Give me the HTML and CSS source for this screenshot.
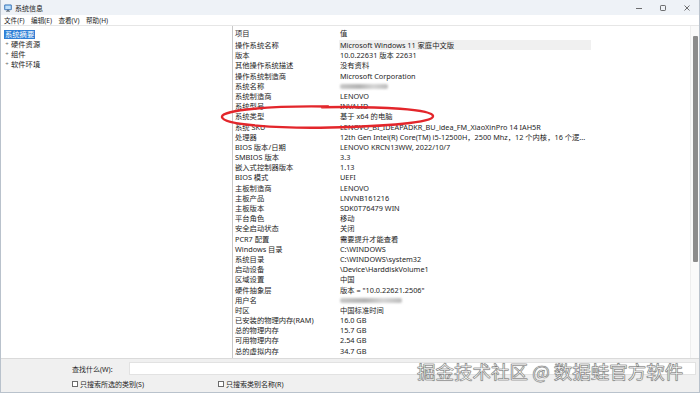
FILE: index.html
```html
<!DOCTYPE html>
<html lang="zh-CN">
<head>
<meta charset="utf-8">
<title>系统信息</title>
<link rel="stylesheet" href="styles.css">
</head>
<body>
<div class="window">
  <div class="titlebar">
    <div class="title-left">
      <svg class="app-icon" width="8" height="8" viewBox="0 0 8 8">
        <rect x="0.5" y="0.8" width="7" height="5" rx="0.6" fill="#4a8fd8" stroke="#2a5f9e" stroke-width="0.5"/>
        <rect x="1.3" y="1.6" width="5.4" height="3.4" fill="#bfe0fb"/>
        <rect x="3" y="5.8" width="2" height="1" fill="#5a6570"/>
        <rect x="2" y="6.8" width="4" height="0.8" fill="#5a6570"/>
      </svg>
      <span class="title-text">系统信息</span>
    </div>
    <div class="controls">
      <svg width="8" height="8" viewBox="0 0 8 8"><line x1="1" y1="4.5" x2="7" y2="4.5" stroke="#333" stroke-width="0.7"/></svg>
      <svg width="8" height="8" viewBox="0 0 8 8"><rect x="1.5" y="1.5" width="5" height="5" rx="0.8" fill="none" stroke="#333" stroke-width="0.7"/></svg>
      <svg width="8" height="8" viewBox="0 0 8 8"><path d="M1.5 1.5 L6.5 6.5 M6.5 1.5 L1.5 6.5" stroke="#333" stroke-width="0.7"/></svg>
    </div>
  </div>
  <div class="menubar">
    <span>文件(F)</span><span>编辑(E)</span><span>查看(V)</span><span>帮助(H)</span>
  </div>
  <div class="main">
    <div class="tree">
      <div class="tree-row"><span class="sel">系统摘要</span></div>
      <div class="tree-row"><span class="exp">+</span>硬件资源</div>
      <div class="tree-row"><span class="exp">+</span>组件</div>
      <div class="tree-row"><span class="exp">+</span>软件环境</div>
    </div>
    <div class="listpane">
      <div class="list">
        <div class="row head"><span class="k">项目</span><span class="v">值</span></div>
        <div class="row hover"><span class="k">操作系统名称</span><span class="v">Microsoft Windows 11 家庭中文版</span></div>
        <div class="row"><span class="k">版本</span><span class="v">10.0.22631 版本 22631</span></div>
        <div class="row"><span class="k">其他操作系统描述</span><span class="v">没有资料</span></div>
        <div class="row"><span class="k">操作系统制造商</span><span class="v">Microsoft Corporation</span></div>
        <div class="row"><span class="k">系统名称</span><span class="v"><span class="blur b1"></span></span></div>
        <div class="row"><span class="k">系统制造商</span><span class="v">LENOVO</span></div>
        <div class="row"><span class="k">系统型号</span><span class="v">INVALID</span></div>
        <div class="row"><span class="k">系统类型</span><span class="v">基于 x64 的电脑</span></div>
        <div class="row"><span class="k">系统 SKU</span><span class="v">LENOVO_BI_IDEAPADKR_BU_idea_FM_XiaoXinPro 14 IAH5R</span></div>
        <div class="row"><span class="k">处理器</span><span class="v">12th Gen Intel(R) Core(TM) i5-12500H，2500 Mhz，12 个内核，16 个逻...</span></div>
        <div class="row"><span class="k">BIOS 版本/日期</span><span class="v">LENOVO KRCN13WW, 2022/10/7</span></div>
        <div class="row"><span class="k">SMBIOS 版本</span><span class="v">3.3</span></div>
        <div class="row"><span class="k">嵌入式控制器版本</span><span class="v">1.13</span></div>
        <div class="row"><span class="k">BIOS 模式</span><span class="v">UEFI</span></div>
        <div class="row"><span class="k">主板制造商</span><span class="v">LENOVO</span></div>
        <div class="row"><span class="k">主板产品</span><span class="v">LNVNB161216</span></div>
        <div class="row"><span class="k">主板版本</span><span class="v">SDK0T76479 WIN</span></div>
        <div class="row"><span class="k">平台角色</span><span class="v">移动</span></div>
        <div class="row"><span class="k">安全启动状态</span><span class="v">关闭</span></div>
        <div class="row"><span class="k">PCR7 配置</span><span class="v">需要提升才能查看</span></div>
        <div class="row"><span class="k">Windows 目录</span><span class="v">C:\WINDOWS</span></div>
        <div class="row"><span class="k">系统目录</span><span class="v">C:\WINDOWS\system32</span></div>
        <div class="row"><span class="k">启动设备</span><span class="v">\Device\HarddiskVolume1</span></div>
        <div class="row"><span class="k">区域设置</span><span class="v">中国</span></div>
        <div class="row"><span class="k">硬件抽象层</span><span class="v">版本 = "10.0.22621.2506"</span></div>
        <div class="row"><span class="k">用户名</span><span class="v"><span class="blur b2"></span></span></div>
        <div class="row"><span class="k">时区</span><span class="v">中国标准时间</span></div>
        <div class="row"><span class="k">已安装的物理内存(RAM)</span><span class="v">16.0 GB</span></div>
        <div class="row"><span class="k">总的物理内存</span><span class="v">15.7 GB</span></div>
        <div class="row"><span class="k">可用物理内存</span><span class="v">2.54 GB</span></div>
        <div class="row"><span class="k">总的虚拟内存</span><span class="v">34.7 GB</span></div>
      </div>
      <div class="scrollbar"><div class="thumb"></div></div>
      <svg class="mark" width="220" height="26" viewBox="0 0 220 26">
        <path d="M110 2.5 C 55 1.5, 3 6, 4 13 C 5 21, 60 24.5, 112 23.5 C 168 22.5, 216 18.5, 215 12 C 214 5.5, 165 2.2, 104 3.2" fill="none" stroke="#e3262b" stroke-width="2.4" stroke-linecap="round"/>
      </svg>
    </div>
  </div>
  <div class="bottom">
    <div class="find">
      <span class="find-label">查找什么(W):</span>
      <div class="input"></div>
    </div>
    <div class="checks">
      <label class="chk c1"><span class="box"></span>只搜索所选的类别(S)</label>
      <label class="chk"><span class="box"></span>只搜索类别名称(R)</label>
    </div>
    <div class="watermark">掘金技术社区 @ 数据蛙官方软件</div>
  </div>
</div>
</body>
</html>
```
FILE: styles.css
```css
* { box-sizing: border-box; }
html, body { margin: 0; padding: 0; }
body {
  width: 700px;
  height: 393px;
  overflow: hidden;
  background: #ffffff;
  font-family: "Noto Sans", "Noto Sans CJK SC", sans-serif;
  font-size: 7.3px;
  color: #1e1e1e;
}
.window {
  width: 700px;
  height: 393px;
  display: flex;
  flex-direction: column;
  border: 1px solid #b9c2cc;
  border-top: none;
  position: relative;
}
.titlebar {
  height: 15px;
  background: #eef2f7;
  display: flex;
  align-items: center;
  justify-content: space-between;
  padding: 0 4px 0 3px;
}
.title-left { display: flex; align-items: center; gap: 3px; }
.app-icon { display: block; }
.title-text { font-size: 7px; color: #222; }
.controls { display: flex; gap: 16px; align-items: center; padding-right: 4px; }
.controls svg { display: block; }
.menubar {
  height: 11px;
  background: #ffffff;
  display: flex;
  align-items: center;
  gap: 6.5px;
  padding-left: 3px;
  font-size: 6.6px;
  border-bottom: 1px solid #e6e6e6;
}
.main {
  height: 333px;
  display: flex;
  background: #ffffff;
  border-bottom: 1px solid #dadada;
}
.tree {
  width: 232px;
  border-right: 1px solid #c8c8c8;
  padding: 3px 0 0 3px;
}
.tree-row {
  height: 10px;
  line-height: 10px;
  display: flex;
  align-items: center;
}
.sel {
  background: #2f7fd6;
  color: #fff;
  padding: 0 1px;
  line-height: 9px;
}
.exp {
  width: 6px;
  font-size: 6px;
  color: #666;
  margin-right: 1px;
  text-align: center;
}
.listpane {
  flex: 1;
  display: flex;
  position: relative;
}
.list { flex: 1; padding-top: 1px; }
.row {
  display: grid;
  grid-template-columns: 106px 252px;
  height: 10.2px;
  line-height: 10.2px;
  white-space: nowrap;
}
.row .k { padding-left: 2px; }
.row .v { padding-left: 1px; overflow: visible; }
.row.head { height: 13px; line-height: 12px; }
.row.hover .v { background: #f0f0f0; }
.blur {
  display: inline-block;
  height: 5px;
  vertical-align: middle;
  background: linear-gradient(90deg, #c8c8c8, #b4b4b4 40%, #d6d6d6 70%, #bdbdbd);
  filter: blur(1px);
  border-radius: 2px;
}
.b1 { width: 48px; }
.b2 { width: 62px; }
.scrollbar {
  width: 9px;
  padding: 10px 1px 0 2px;
  background: #fafafa;
  border-left: 1px solid #eeeeee;
}
.thumb {
  width: 5px;
  height: 226px;
  background: #8c8c8c;
  border-radius: 1px;
}
.mark {
  position: absolute;
  left: -15px;
  top: 78px;
}
.bottom {
  flex: 1;
  background: #f0f0f0;
  position: relative;
  padding: 3px 3px 0 71px;
}
.find { display: flex; align-items: center; height: 13px; }
.find-label { width: 57px; font-size: 7px; }
.input {
  flex: 1;
  height: 13px;
  background: #ffffff;
  border: 1px solid #e2e2e2;
}
.checks {
  display: flex;
  margin-top: 3px;
  font-size: 7px;
  height: 11px;
  align-items: center;
}
.chk { display: flex; align-items: center; gap: 2px; }
.chk.c1 { width: 146px; }
.box {
  width: 6px;
  height: 6px;
  border: 1px solid #6b6b6b;
  background: #fff;
}
.watermark {
  position: absolute;
  left: 416px;
  top: 0px;
  font-family: "Noto Sans CJK SC", sans-serif;
  font-size: 18.5px;
  line-height: 24px;
  color: #ffffff;
  letter-spacing: 0;
  -webkit-text-stroke: 0.5px #7a7a7a;
  text-shadow: 0 0 1px #555;
}
```
